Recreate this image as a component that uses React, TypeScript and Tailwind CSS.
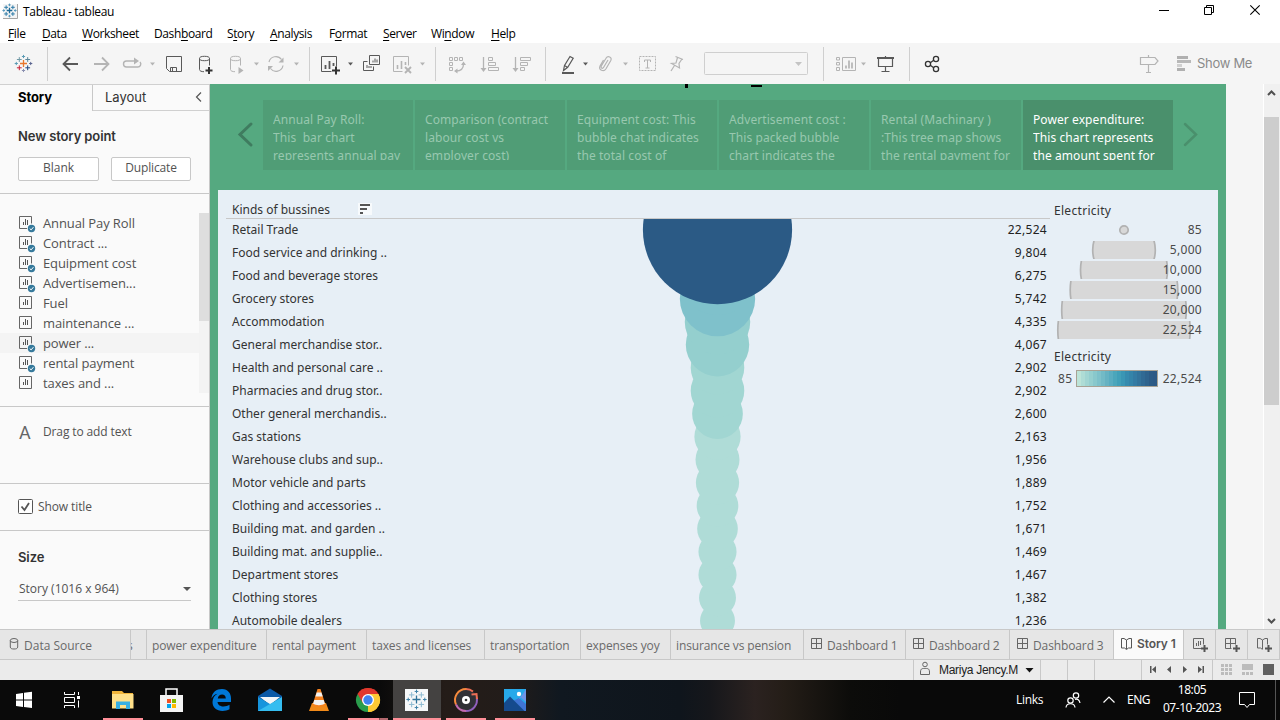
import React from "react";

type IcProps = { x: number; y: number; w: number; h: number; children?: React.ReactNode };

/* Icon cell: the drawing inside uses window coordinates, the cell itself sits in the flow. */
function Ic({ x, y, w, h, children }: IcProps) {
  return (
    <svg width={w} height={h} viewBox={`${x} ${y} ${w} ${h}`} fill="none" className="block shrink-0">
      {children}
    </svg>
  );
}

function Plus({ x, y, s, c, t = 1 }: { x: number; y: number; s: number; c: string; t?: number }) {
  return <path d={`M${x - s} ${y}H${x + s}M${x} ${y - s}V${y + s}`} stroke={c} strokeWidth={t} />;
}

function Caret({ x, y, c }: { x: number; y: number; c: string }) {
  return <path d={`M${x - 2.5} ${y - 1.5}h5l-2.5 3z`} fill={c} />;
}

const D = "#595959";
const L = "#b4b4b4";

function TableauMark({ x, y, k = 1, colors }: { x: number; y: number; k?: number; colors: string[] }) {
  return (
    <g>
      <Plus x={x} y={y} s={3.5 * k} c={colors[0]} t={1.3} />
      <Plus x={x - 4.2 * k} y={y - 4 * k} s={2.4 * k} c={colors[1]} />
      <Plus x={x + 4.2 * k} y={y - 4 * k} s={2.4 * k} c={colors[2]} />
      <Plus x={x - 4.2 * k} y={y + 4.3 * k} s={2.4 * k} c={colors[3]} />
      <Plus x={x + 4.2 * k} y={y + 4.3 * k} s={2.4 * k} c={colors[4]} />
      <Plus x={x} y={y - 7 * k} s={1.6 * k} c={colors[5]} />
      <Plus x={x} y={y + 7 * k} s={1.6 * k} c={colors[6]} />
      <Plus x={x - 7.2 * k} y={y} s={1.6 * k} c={colors[7]} />
      <Plus x={x + 7.2 * k} y={y} s={1.6 * k} c={colors[8]} />
    </g>
  );
}

const BLUE = ["#1f6a97", "#2d7ba8", "#2d7ba8", "#2d7ba8", "#2d7ba8", "#5b9bbd", "#5b9bbd", "#5b9bbd", "#5b9bbd"];
const SOFT = ["#2f7399", "#8dbbd2", "#8dbbd2", "#8dbbd2", "#8dbbd2", "#3f83a8", "#3f83a8", "#3f83a8", "#3f83a8"];
const BRAND = ["#e8762c", "#7199a6", "#5b879b", "#c72035", "#1f447e", "#5b9bb5", "#8a8fb0", "#5b9bb5", "#5b6591"];

function TitleBar() {
  return (
    <div className="flex h-[23px] bg-white">
      <Ic x={0} y={0} w={23} h={23}>
        <rect x="3" y="4" width="14" height="14" fill="#f5f5f5" />
        <path d="M3 18.5H17.5V4" stroke="#a5a5a5" />
        <TableauMark x={9.5} y={10.5} k={0.8} colors={BLUE} />
      </Ic>
      <span className="w-[1120px] text-[12px] leading-[24px] tracking-[-0.32px] text-black">Tableau - tableau</span>
      <Ic x={1143} y={0} w={137} h={23}>
        <path d="M1159 10.5h10" stroke="#000" />
        <path d="M1204.500 7.500h7v7h-7zM1206.500 7.500v-2h7v7h-2" stroke="#000" />
        <path d="M1250.300 5.300l9.400 9.400M1259.700 5.300l-9.400 9.400" stroke="#000" strokeWidth="1.1" />
      </Ic>
    </div>
  );
}

const MENUS: { a: string; u: string; b: string; cls: string }[] = [
  { a: "", u: "F", b: "ile", cls: "w-[34px]" },
  { a: "", u: "D", b: "ata", cls: "w-[40px]" },
  { a: "", u: "W", b: "orksheet", cls: "w-[72px]" },
  { a: "Dash", u: "b", b: "oard", cls: "w-[73px]" },
  { a: "S", u: "t", b: "ory", cls: "w-[43px]" },
  { a: "", u: "A", b: "nalysis", cls: "w-[59px]" },
  { a: "F", u: "o", b: "rmat", cls: "w-[54px]" },
  { a: "", u: "S", b: "erver", cls: "w-[48px]" },
  { a: "Wi", u: "n", b: "dow", cls: "w-[60px]" },
  { a: "", u: "H", b: "elp", cls: "w-[40px]" },
];

function MenuBar() {
  return (
    <div className="flex h-5 bg-white pl-2 text-[12px] leading-[22px] tracking-[-0.38px] text-black">
      {MENUS.map((m) => (
        <span key={m.a + m.u + m.b} className={m.cls}>
          {m.a}
          <span className="underline underline-offset-2">{m.u}</span>
          {m.b}
        </span>
      ))}
    </div>
  );
}

function Sep({ x }: { x: number }) {
  return <path d={`M${x + 0.5} 47v34`} stroke="#cfcfcf" />;
}

function ToolBar() {
  return (
    <div className="flex h-[41px] bg-[#f5f5f5]">
      <Ic x={0} y={43} w={56} h={41}>
        <TableauMark x={23.5} y={63.5} colors={BRAND} />
        <Sep x={47} />
      </Ic>
      <Ic x={56} y={43} w={32} h={41}>
        <path d="M78 64H63.500M70 57.500L63.500 64L70 70.500" stroke={D} strokeWidth="1.8" />
      </Ic>
      <Ic x={88} y={43} w={30} h={41}>
        <path d="M94 64h14.500M102 57.500l6.500 6.500l-6.500 6.500" stroke={L} strokeWidth="1.8" />
      </Ic>
      <Ic x={118} y={43} w={42} h={41}>
        <path d="M134 61h-7.500a3 3 0 0 0 0 6h11a3 3 0 0 0 2.500-5" stroke={L} strokeWidth="1.4" />
        <path d="M134 57.500l5 3.500l-5 3.500z" fill={L} />
        <Caret x={152.500} y={64} c={L} />
      </Ic>
      <Ic x={160} y={43} w={30} h={41}>
        <path d="M166.500 56.500h15v15h-12l-3-3z" stroke={D} />
        <path d="M170.500 71.500v-4h6v4M172.500 68v3" stroke={D} />
      </Ic>
      <Ic x={190} y={43} w={32} h={41}>
        <ellipse cx="204.500" cy="58.500" rx="5" ry="2.200" stroke={D} />
        <path d="M199.500 58.500v11c0 1.500 2 2.200 4.500 2.200M209.500 58.500v7" stroke={D} />
        <path d="M205.500 70.500h7M209 67v7" stroke="#333" strokeWidth="2" />
      </Ic>
      <Ic x={222} y={43} w={42} h={41}>
        <ellipse cx="235.500" cy="58.500" rx="5" ry="2.200" stroke={L} />
        <path d="M230.500 58.500v11c0 1.500 2 2.200 4.500 2.200M240.500 58.500v7" stroke={L} />
        <path d="M238.500 67l5 3.500l-5 3.500z" fill={L} />
        <Caret x={256.500} y={64} c={L} />
      </Ic>
      <Ic x={264} y={43} w={52} h={41}>
        <path d="M269 62a7 7 0 0 1 12.500-2.500M283 65.500a7 7 0 0 1-12.500 3" stroke={L} strokeWidth="1.200" />
        <path d="M283.500 57.500v5h-5zM268 71v-5h5z" fill={L} />
        <Caret x={296.500} y={64} c={L} />
        <Sep x={309} />
      </Ic>
      <Ic x={316} y={43} w={42} h={41}>
        <path d="M331.500 71.500h-10v-15h15v10" stroke={D} />
        <path d="M325.500 69v-4M329.500 69v-8M333.500 66v-3" stroke={D} strokeWidth="1.800" />
        <path d="M332 70.500h8M336 66.500v8" stroke="#333" strokeWidth="2" />
        <Caret x={350.500} y={64} c={D} />
      </Ic>
      <Ic x={358} y={43} w={30} h={41}>
        <path d="M369.500 55.500h10v9h-10z" stroke={D} />
        <path d="M373 62.500v-2M375 62.500v-4M377 62.500v-3" stroke={D} />
        <path d="M367.500 61.500h-4v9h10v-4M367 68v-3M369 68v-2M371 68v-2" stroke={D} />
      </Ic>
      <Ic x={388} y={43} w={58} h={41}>
        <path d="M402.500 71.500h-9v-15h15v9" stroke={L} />
        <path d="M397.500 69v-4M401.500 69v-8M405.500 65v-3" stroke={L} strokeWidth="1.600" />
        <path d="M405 67l6 6M411 67l-6 6" stroke={L} strokeWidth="1.900" />
        <Caret x={422.500} y={64} c={L} />
        <Sep x={435} />
      </Ic>
      <Ic x={446} y={43} w={30} h={41}>
        <path d="M449.500 57.500h3v3h-3zM454.500 57.500h3v3h-3zM459.500 57.500h3v3h-3zM449.500 62.500h3v3h-3zM449.500 67.500h3v3h-3z" stroke={L} />
        <path d="M463.500 64c0 4.500-3 7-7.500 7" stroke={L} strokeWidth="1.300" />
        <path d="M461 65l2.500-3.500l2.500 3.500zM457.500 68.500l-3.500 2.500l3.500 2.500z" fill={L} />
      </Ic>
      <Ic x={476} y={43} w={32} h={41}>
        <path d="M483.500 57v13" stroke={L} strokeWidth="1.300" />
        <path d="M480.500 68h6l-3 4z" fill={L} />
        <path d="M488.500 57.500h4v3h-4zM488.500 62.500h7v3h-7zM488.500 67.500h10v3h-10z" stroke={L} />
      </Ic>
      <Ic x={508} y={43} w={48} h={41}>
        <path d="M515.500 57v13" stroke={L} strokeWidth="1.300" />
        <path d="M512.500 68h6l-3 4z" fill={L} />
        <path d="M520.500 57.500h10v3h-10zM520.500 62.500h7v3h-7zM520.500 67.500h4v3h-4z" stroke={L} />
        <Sep x={545} />
      </Ic>
      <Ic x={556} y={43} w={38} h={41}>
        <path d="M563.500 70.500l1-5l5.500-9l3.200 1.800l-5.500 9zM564.500 65.500l3.200 2" stroke={D} strokeWidth="1.200" />
        <path d="M562 73h12" stroke={D} strokeWidth="2" />
        <Caret x={585.500} y={64} c={D} />
      </Ic>
      <Ic x={594} y={43} w={40} h={41}>
        <path d="M608 60l-4.500 7.500c-.8 1.500-3 .5-2.300-1.200l4.800-8c1.800-3.200 6.500-1.200 4.800 2.200l-4.800 8.200c-2.300 3.700-7.700 1.300-6-2.700l3.500-6" stroke={L} strokeWidth="1.200" />
        <Caret x={625.500} y={64} c={L} />
      </Ic>
      <Ic x={634} y={43} w={32} h={41}>
        <path d="M639.500 56.500h16v14h-16z" stroke={L} strokeDasharray="2 1" />
        <path d="M644.500 62v-2h6v2M647.500 60v8M645.500 68h4" stroke={L} />
      </Ic>
      <Ic x={666} y={43} w={38} h={41}>
        <path d="M675.500 56.500l7.500 3M677.500 57.500l-1.500 5.500l-4.500.500l8 4.500l-.500-4.500l3-4.500M674.500 65.500l-3.500 5.500" stroke={L} strokeWidth="1.200" />
      </Ic>
      <Ic x={704} y={43} w={128} h={41}>
        <rect x="704.500" y="52.500" width="103" height="22" rx="1" stroke="#cfcfcf" />
        <path d="M795 62h7l-3.500 4z" fill="#c4c4c4" />
        <Sep x={823} />
      </Ic>
      <Ic x={832} y={43} w={40} h={41}>
        <path d="M836.500 57.500h3v2.500h-3zM836.500 62.500h3v2.500h-3zM836.500 67.500h3v3h-3zM842.500 57.500h13v13h-13z" stroke={L} />
        <path d="M846 68.500v-3M849 68.500v-8M852 68.500v-6" stroke={L} strokeWidth="1.700" />
        <Caret x={863.500} y={64} c={L} />
      </Ic>
      <Ic x={872} y={43} w={48} h={41}>
        <path d="M877 58h17" stroke={D} strokeWidth="2" />
        <path d="M878.500 58v8.500h14v-8.500M885.500 56v1M885.500 67v4M881.500 71.500h8" stroke={D} strokeWidth="1.200" />
        <Sep x={909} />
      </Ic>
      <Ic x={920} y={43} w={210} h={41}>
        <path d="M930 63l4-3M930 65l4 3" stroke="#333" strokeWidth="1.200" />
        <circle cx="928" cy="64" r="2.600" stroke="#333" strokeWidth="1.300" />
        <circle cx="936" cy="59" r="2.600" stroke="#333" strokeWidth="1.300" />
        <circle cx="936" cy="69" r="2.600" stroke="#333" strokeWidth="1.300" />
      </Ic>
      <Ic x={1130} y={43} w={67} h={41}>
        <path d="M1140.500 57.500h14.500l3 3.500l-3 3.500h-14.500zM1148.500 55v2M1148.500 65v7M1146 72.500h5" stroke={L} strokeWidth="1.200" />
        <path d="M1177 56h11v3h-11zM1177 68h8v3h-8z" fill="#b0b0b0" />
        <path d="M1177 60h14v3h-14z" fill="#b8b8b8" />
        <path d="M1177 64h5v3h-5z" fill="#d0d0d0" />
      </Ic>
      <span className="font-['Inter'] text-[13px] leading-[41px] tracking-[-0.3px] text-[#8a8a8a]">Show Me</span>
    </div>
  );
}

const SHEETS: { name: string; used: boolean }[] = [
  { name: "Annual Pay Roll", used: true },
  { name: "Contract ...", used: true },
  { name: "Equipment cost", used: true },
  { name: "Advertisemen...", used: true },
  { name: "Fuel", used: false },
  { name: "maintenance ...", used: false },
  { name: "power ...", used: true },
  { name: "rental payment", used: true },
  { name: "taxes and ...", used: false },
];

function SheetIcon({ used }: { used: boolean }) {
  return (
    <Ic x={0} y={0} w={43} h={20}>
      <path d={used ? "M27 15.500h-7.500v-12h12v7" : "M19.500 3.500h12v12h-12z"} stroke="#666" />
      <path d="M23.500 12v-3M25.500 12v-6M27.500 12v-5" stroke="#555" />
      {used && (
        <g>
          <circle cx="31.500" cy="15.500" r="3.700" fill="#35799b" />
          <path d="M29.700 15.500l1.400 1.400l2.300-2.700" stroke="#fff" />
        </g>
      )}
    </Ic>
  );
}

function SideBar() {
  return (
    <div className="flex w-[210px] shrink-0 flex-col border-r border-[#c8c8c8] bg-[#fafafa] text-[#525252]">
      <div className="flex h-[27px] border-t border-[#d0d0d0] font-['Inter'] text-[13px] leading-[24px]">
        <div className="w-[93px] border-r border-[#c8c8c8] pl-[18px] font-bold tracking-[-0.1px] text-black">Story</div>
        <div className="flex flex-1 border-b border-[#d0d0d0] pl-3">
          <span className="w-[87px] text-[#333]">Layout</span>
          <Ic x={192} y={85} w={16} h={25}>
            <path d="M201 92.500l-4.500 4.500l4.500 4.500" stroke="#555" strokeWidth="1.200" />
          </Ic>
        </div>
      </div>
      <div className="flex h-[83px] flex-col border-b border-[#c8c8c8] pl-[18px]">
        <div className="mt-[15px] h-5 font-['Inter'] text-[13px] leading-5 font-semibold tracking-[-0.1px] text-[#333]">New story point</div>
        <div className="mt-[11px] flex gap-3 text-center text-[12px] leading-[20px]">
          <div className="h-6 w-[81px] rounded-[2px] border border-[#c8c8c8] bg-white">Blank</div>
          <div className="h-6 w-[80px] rounded-[2px] border border-[#c8c8c8] bg-white tracking-[-0.15px]">Duplicate</div>
        </div>
      </div>
      <div className="flex h-[213px] border-b border-[#c8c8c8] pt-[19px]">
        <div className="w-[199px]">
          {SHEETS.map((s) => (
            <div key={s.name} className={s.name === "power ..." ? "flex h-5 bg-[#f4f4f4]" : "flex h-5"}>
              <SheetIcon used={s.used} />
              <span className="text-[13px] leading-5 tracking-[-0.1px] whitespace-pre">{s.name}</span>
            </div>
          ))}
        </div>
        <div className="h-[180px] w-[10px] bg-[#f3f3f3]">
          <div className="h-[108px] bg-[#dedede]" />
        </div>
      </div>
      <div className="flex h-[77px] border-b border-[#c8c8c8] pt-[15px] leading-5">
        <span className="w-[43px] pl-[19px] font-['Roboto'] text-[18px] leading-[21px] text-[#666]">A</span>
        <span className="text-[12px] tracking-[-0.12px]">Drag to add text</span>
      </div>
      <div className="flex h-[47px] border-b border-[#c8c8c8] text-[12px] leading-[46px]">
        <Ic x={0} y={484} w={38} h={46}>
          <rect x="18.500" y="499.500" width="14" height="14" rx="1" stroke="#555" fill="#fff" />
          <path d="M21.500 506.500l3 3.500l4.500-7" stroke="#555" strokeWidth="1.800" />
        </Ic>
        <span className="tracking-[-0.1px]">Show title</span>
      </div>
      <div className="pl-[18px]">
        <div className="mt-[16px] h-5 font-['Inter'] text-[13px] leading-5 font-semibold tracking-[-0.1px] text-[#333]">Size</div>
        <div className="mt-[11px] flex h-[23px] w-[173px] border-b border-[#c8c8c8] pl-px text-[12px] leading-[22px]">
          <span className="w-[164px]">Story (1016 x 964)</span>
          <Ic x={183} y={578} w={8} h={22}>
            <path d="M183 587h8l-4 4z" fill="#555" />
          </Ic>
        </div>
      </div>
    </div>
  );
}

const POINTS: string[][] = [
  ["Annual Pay Roll:", "This  bar chart", "represents annual pay"],
  ["Comparison (contract", "labour cost vs", "employer cost)"],
  ["Equipment cost: This", "bubble chat indicates", "the total cost of"],
  ["Advertisement cost :", "This packed bubble", "chart indicates the"],
  ["Rental (Machinary )", ":This tree map shows", "the rental payment for"],
  ["Power expenditure:", "This chart represents", "the amount spent for"],
];

const ROWS: { name: string; label: string; value: number; color: string }[] = [
  { name: "Retail Trade", label: "22,524", value: 22524, color: "#2b5a85" },
  { name: "Food service and drinking ..", label: "9,804", value: 9804, color: "#4fa5bb" },
  { name: "Food and beverage stores", label: "6,275", value: 6275, color: "#7fc1cb" },
  { name: "Grocery stores", label: "5,742", value: 5742, color: "#7fc1cb" },
  { name: "Accommodation", label: "4,335", value: 4335, color: "#94cfce" },
  { name: "General merchandise stor..", label: "4,067", value: 4067, color: "#94cfce" },
  { name: "Health and personal care ..", label: "2,902", value: 2902, color: "#a1d6d2" },
  { name: "Pharmacies and drug stor..", label: "2,902", value: 2902, color: "#a1d6d2" },
  { name: "Other general merchandis..", label: "2,600", value: 2600, color: "#a1d6d2" },
  { name: "Gas stations", label: "2,163", value: 2163, color: "#afdcd7" },
  { name: "Warehouse clubs and sup..", label: "1,956", value: 1956, color: "#afdcd7" },
  { name: "Motor vehicle and parts", label: "1,889", value: 1889, color: "#afdcd7" },
  { name: "Clothing and accessories ..", label: "1,752", value: 1752, color: "#afdcd7" },
  { name: "Building mat. and garden ..", label: "1,671", value: 1671, color: "#afdcd7" },
  { name: "Building mat. and supplie..", label: "1,469", value: 1469, color: "#afdcd7" },
  { name: "Department stores", label: "1,467", value: 1467, color: "#afdcd7" },
  { name: "Clothing stores", label: "1,382", value: 1382, color: "#afdcd7" },
  { name: "Automobile dealers", label: "1,236", value: 1236, color: "#afdcd7" },
];

const SIZES = [
  { label: "85", r: 4.2 },
  { label: "5,000", r: 31.3 },
  { label: "10,000", r: 43.5 },
  { label: "15,000", r: 53.8 },
  { label: "20,000", r: 62.3 },
  { label: "22,524", r: 66.2 },
];

const RAMP = ["#bce4d8", "#aedcd5", "#a1d5d2", "#95cfcf", "#89c8cc", "#7ec1ca", "#72bac6", "#66b2c2", "#59acc0", "#4ba6bb", "#419fb8", "#3a96b4", "#368bae", "#3584a9", "#347ba3", "#33739b", "#306a94", "#2e638d", "#2c5b86", "#2c5985"];

function Legend() {
  return (
    <div className="w-[168px] pt-[11px] pl-1 tracking-[0.3px] text-[#4a4a4a]">
      <div className="h-[19px] leading-5 text-[#333]">Electricity</div>
      {SIZES.map((s) => (
        <div key={s.label} className="grid h-5 w-[148px] items-center leading-[20px]">
          <svg width="148" height="18" viewBox="1054 -9 148 18" className="[grid-area:1/1]">
            <circle cx="1124" cy="0" r={s.r} fill="#d8d8d8" stroke="#b2b2b2" strokeWidth="1.700" />
          </svg>
          <span className="text-right [grid-area:1/1]">{s.label}</span>
        </div>
      ))}
      <div className="mt-[7px] h-5 leading-5 text-[#333]">Electricity</div>
      <div className="mt-[3px] flex h-[17px] w-[148px] items-center pl-1">
        <span className="w-[18px]">85</span>
        <div className="flex h-[17px] w-[82px] border border-[#a8a294]">
          {RAMP.map((c) => (
            <div key={c} className="flex-1" style={{ backgroundColor: c }} />
          ))}
        </div>
        <span className="flex-1 text-right">22,524</span>
      </div>
    </div>
  );
}

function StoryCanvas() {
  return (
    <div className="flex w-[1016px] shrink-0 flex-col overflow-hidden bg-[#55a980] font-['Noto_Sans'] text-[12px]">
      <Ic x={210} y={84} w={1016} h={16}>
        <path d="M685 84h3v4h-3zM751 85h11v2h-11z" fill="#000" />
      </Ic>
      <div className="flex h-[70px]">
        <Ic x={210} y={100} w={53} h={70}>
          <path d="M251 124l-11 10.500l11 10.500" stroke="#3f7c5f" strokeWidth="3" strokeLinecap="round" />
        </Ic>
        <div className="flex gap-[2px]">
          {POINTS.map((p, i) => (
            <div
              key={p[0]}
              className={
                i === 5
                  ? "h-[70px] w-[150px] bg-[#4a906c] pt-[11px] pl-[10px] text-white"
                  : "h-[70px] w-[150px] bg-[#509d76] pt-[11px] pl-[10px] text-[#98c8af]"
              }
            >
              <div className="h-[49px] overflow-hidden leading-[18px] tracking-[0.08px] whitespace-pre">
                {p.map((l) => (
                  <div key={l}>{l}</div>
                ))}
              </div>
            </div>
          ))}
        </div>
        <Ic x={1173} y={100} w={53} h={70}>
          <path d="M1185 124l11 10.500l-11 10.500" stroke="#4a906c" strokeWidth="2.500" strokeLinecap="round" />
        </Ic>
      </div>
      <div className="mt-5 ml-2 flex h-[439px] w-[1000px] overflow-hidden bg-[#e7eff6] pl-2">
        <div className="flex w-[824px] flex-col">
          <div className="flex h-[29px] shrink-0 border-b border-[#c8c8c8] pl-[6px] leading-[39px] text-[#333]">
            <span className="w-[126px]">Kinds of bussines</span>
            <Ic x={358} y={190} w={16} h={28}>
              <path d="M358 203h14v12h-14z" fill="#f7fafc" />
              <path d="M360 205h10M360 209h7M360 213h3" stroke="#555" strokeWidth="1.800" />
            </Ic>
          </div>
          <div className="flex h-[410px] overflow-hidden leading-[21px]">
            <div className="w-[166px] pl-[6px] whitespace-pre text-[#333]">
              {ROWS.map((r) => (
                <div key={r.name} className="h-[23px]">{r.name}</div>
              ))}
            </div>
            <Ic x={392} y={219} w={598} h={410}>
              {ROWS.map((r, i) => ({ ...r, i })).reverse().map((r) => (
                <circle key={r.name} cx="717.500" cy={229.7 + 23 * r.i} r={74.6 * Math.sqrt(r.value / 22524)} fill={r.color} />
              ))}
            </Ic>
            <div className="w-[57px] text-right tracking-[0.3px] text-[#222]">
              {ROWS.map((r) => (
                <div key={r.name} className="h-[23px]">{r.label}</div>
              ))}
            </div>
          </div>
        </div>
        <Legend />
      </div>
    </div>
  );
}

function Scroll() {
  return (
    <div className="ml-[37px] flex w-[17px] flex-col border-l border-white bg-[#f0f0f0]">
      <Ic x={1264} y={84} w={16} h={33}>
        <path d="M1268 95l3.500-3.500l3.500 3.500" stroke="#505050" strokeWidth="2" />
      </Ic>
      <div className="h-[288px] w-[15px] bg-[#cdcdcd]" />
      <div className="flex-1" />
      <Ic x={1264} y={610} w={16} h={19}>
        <path d="M1268 619l3.500 3.500l3.500-3.500" stroke="#505050" strokeWidth="2" />
      </Ic>
    </div>
  );
}

const TABS: { name: string; cls: string }[] = [
  { name: "power expenditure", cls: "w-[120px]" },
  { name: "rental payment", cls: "w-[100px]" },
  { name: "taxes and licenses", cls: "w-[118px]" },
  { name: "transportation", cls: "w-[96px]" },
  { name: "expenses yoy", cls: "w-[90px]" },
  { name: "insurance vs pension", cls: "w-[133px]" },
];

function Tabs() {
  return (
    <div className="flex h-[31px] border-y border-[#c8c8c8] bg-[#e6e6e6] text-[12px] leading-[31px] tracking-[-0.12px] whitespace-nowrap text-[#6a6a6a]">
      <div className="flex w-[131px] shrink-0 border-r border-[#c8c8c8]">
        <Ic x={0} y={630} w={24} h={29}>
          <ellipse cx="14" cy="640.500" rx="3.700" ry="2" stroke="#666" />
          <path d="M10.300 640.500v6.500c0 1.500 1.500 2 3.700 2s3.700-.500 3.700-2v-6.500" stroke="#666" />
        </Ic>
        <span className="tracking-normal">Data Source</span>
      </div>
      <div className="flex w-4 shrink-0 overflow-hidden border-r border-[#c8c8c8]">
        <span className="-ml-[4px]">s</span>
      </div>
      {TABS.map((t) => (
        <div key={t.name} className={`${t.cls} shrink-0 border-r border-[#c8c8c8] pl-[5px]`}>{t.name}</div>
      ))}
      {["Dashboard 1", "Dashboard 2", "Dashboard 3"].map((t, i) => (
        <div key={t} className={i === 0 ? "flex w-[102px] shrink-0 border-r border-[#c8c8c8]" : "flex w-[104px] shrink-0 border-r border-[#c8c8c8]"}>
          <Ic x={0} y={630} w={23} h={29}>
            <path d="M7.500 638.500h10v10h-10zM12.500 638.500v10M7.500 643.500h10" stroke="#666" />
          </Ic>
          <span>{t}</span>
        </div>
      ))}
      <div className="flex w-[70px] shrink-0 border-r border-[#c8c8c8] bg-[#fafafa] font-['Inter'] font-semibold leading-[27px] tracking-[-0.1px] text-[#555]">
        <Ic x={1114} y={630} w={23} h={29}>
          <path d="M1126.500 640l-2.500-1.500h-2.500v9.500h3l2 1.500l2-1.500h3v-9.500h-2.500zM1126.500 640v9" stroke="#555" />
        </Ic>
        <span>Story 1</span>
      </div>
      <Ic x={1184} y={630} w={96} h={29}>
        <path d="M1202.500 648.500h-9v-10h10v6M1196.500 646v-3M1198.500 646v-5M1200.500 645v-4" stroke="#666" />
        <path d="M1225.500 638.500h10v6M1225.500 638.500v10h6M1230.500 638.500v10M1225.500 643.500h10" stroke="#666" />
        <path d="M1262.500 640l-2.500-1.500h-2.500v9.500h3l2 1.500M1262.500 640v9M1262.500 640l2.500-1.500h2.500v6" stroke="#666" />
        <path d="M1201 648.500h7M1204.500 645v7M1233 648.500h7M1236.500 645v7M1265 648.500h7M1268.500 645v7" stroke="#555" strokeWidth="2" />
        <path d="M1215.500 630v29M1247.500 630v29M1279.500 630v29" stroke="#c8c8c8" />
      </Ic>
    </div>
  );
}

function Status() {
  return (
    <div className="flex h-[21px] bg-[#ebebeb]">
      <div className="w-[914px] border-r border-[#c8c8c8]" />
      <Ic x={914} y={660} w={25} h={20}>
        <circle cx="925" cy="664.500" r="2.300" stroke="#666" />
        <path d="M920.500 672c0-4 2.500-3.500 4.500-3.500s4.500-.500 4.500 3.500v2.500h-9z" stroke="#666" />
      </Ic>
      <span className="w-[84px] font-['Liberation_Sans'] text-[12px] leading-[20px] tracking-[-0.3px] text-[#222]">Mariya Jency.M</span>
      <Ic x={1023} y={660} w={257} h={20}>
        <path d="M1025.500 668h8l-4 4.500z" fill="#111" />
        <path d="M1040.500 660v20M1067.500 660v20M1094.500 660v20M1141.500 660v20M1212.500 660v20" stroke="#c8c8c8" />
        <path d="M1150 666h1.500v7h-1.500zM1156 666v7l-4-3.500zM1171 666v7l-4-3.500zM1183 666v7l4-3.500zM1198 666v7l4-3.500zM1202.500 666h1.500v7h-1.500z" fill="#555" />
        <path d="M1221 664h3v3h-3zM1225 664h3v3h-3zM1229 664h3v3h-3zM1221 668h3v3h-3zM1225 668h3v3h-3zM1229 668h3v3h-3zM1221 672h3v3h-3zM1225 672h3v3h-3zM1229 672h3v3h-3zM1242 664h11v6h-11zM1242 672h3v3h-3zM1246 672h3v3h-3zM1250 672h3v3h-3z" fill="#bcbcbc" />
        <path d="M1263 664h11v11h-11z" fill="#606060" />
      </Ic>
    </div>
  );
}

function TaskBar() {
  return (
    <div className="flex h-10 shrink-0 bg-[linear-gradient(90deg,#0a0a0a_0,#0a0a0a_380px,#241c18_445px,#221c1a_510px,#101820_560px,#0f151c_680px,#16171b_710px,#2b2220_755px,#241d17_785px,#0c0c0a_850px,#090909_900px)] font-['Noto_Sans'] text-[12px] text-white">
      <Ic x={0} y={680} w={48} h={40}>
        <path d="M16 694l7-1v6.500h-7zM24 692.800l8-1v7.700h-8zM16 700.500h7v6.500l-7-1zM24 700.500h8v7.500l-8-1z" fill="#fff" />
      </Ic>
      <Ic x={48} y={680} w={50} h={40}>
        <path d="M64.500 692v2.500h10v-2.500M64.500 708v-2.500h10v2.500M64.500 697.500h10v5h-10zM78.500 692v3M78.500 700.500v7" stroke="#fff" />
        <rect x="77" y="696" width="3" height="3" fill="#fff" />
      </Ic>
      <Ic x={98} y={680} w={49} h={40}>
        <path d="M112 691h10l2 2h9v15h-21z" fill="#f1b53b" />
        <path d="M112 694h21.500v14.500h-21.500z" fill="#ffe08a" />
        <path d="M116 709v-7.500h14v7.500h-4v-4h-6v4z" fill="#38b0e4" />
        <path d="M103 718h40v2h-40z" fill="#ff8f98" />
      </Ic>
      <Ic x={147} y={680} w={49} h={40}>
        <path d="M166 696v-7h11v7" stroke="#fff" strokeWidth="1.500" />
        <path d="M160 695h23v17h-23z" fill="#f4f4f4" />
        <path d="M167 699h4v4h-4z" fill="#f25022" />
        <path d="M172 699h4v4h-4z" fill="#7fba00" />
        <path d="M167 704h4v4h-4z" fill="#00a4ef" />
        <path d="M172 704h4v4h-4z" fill="#ffb900" />
      </Ic>
      <Ic x={196} y={680} w={49} h={40}>
        <path
          fillRule="evenodd"
          d="M211.500 698.500C212 692 216.500 689 222 689c6 0 9 4.500 9 9.500v3.500h-13.500c.300 3 3 4.500 6 4.500c2.200 0 4.200-.600 6-1.700v4.500c-2 1.200-4.500 1.700-7 1.700c-6 0-10-3.500-10-9c0-3.500 2-6.700 5-8.200c-2.500.500-4.700 2-6 4.700zM217.800 698.500h8c0-2.500-1.500-4-3.700-4s-4 1.500-4.300 4z"
          fill="#0078d7"
        />
      </Ic>
      <Ic x={245} y={680} w={49} h={40}>
        <path d="M258 696l12-7.500l12 7.500v5h-24z" fill="#0b59a6" />
        <path d="M260 697h20l-10 8z" fill="#f3f6f8" />
        <path d="M258 697l24 14h-24z" fill="#1695dd" />
        <path d="M282 697v14h-24z" fill="#35bdf0" />
      </Ic>
      <Ic x={294} y={680} w={49} h={40}>
        <path d="M312 703h14l3 8h-20z" fill="#f18a19" />
        <path d="M317.500 689h3l5 16c-3 2.500-10 2.500-13 0z" fill="#f58220" />
        <path d="M316.700 692.500h4.700l1.300 4h-7.300zM314.300 700h9.400l1.200 3.800c-3 1.800-9 1.800-11.800 0z" fill="#f2f2f2" />
      </Ic>
      <Ic x={343} y={680} w={50} h={40}>
        <path d="M368 700L357.600 694A12 12 0 0 1 378.400 694z" fill="#e0382d" />
        <path d="M368 700L378.400 694A12 12 0 0 1 368 712z" fill="#fcc934" />
        <path d="M368 700L368 712A12 12 0 0 1 357.600 694z" fill="#2a9d4c" />
        <path d="M368 694h10.400a12 12 0 0 0-20.800 0l5.200 9z" fill="#e0382d" />
        <path d="M373.200 703l-5.200 9a12 12 0 0 0 10.400-18h-10.400z" fill="#fcc934" />
        <circle cx="368" cy="700" r="6" fill="#fff" />
        <circle cx="368" cy="700" r="4.700" fill="#3f83ef" />
        <path d="M348 718h31.500v2h-31.500z" fill="#ff8f98" />
        <path d="M380 718h8v2h-8z" fill="#b3686e" />
      </Ic>
      <Ic x={393} y={680} w={48} h={40}>
        <path d="M393 680h48v38h-48z" fill="#444241" />
        <path d="M405 689h23v22h-23z" fill="#f6f8f9" />
        <TableauMark x={416.5} y={699.5} k={1.15} colors={SOFT} />
        <path d="M393 718h48v2h-48z" fill="#ff8f98" />
      </Ic>
      <Ic x={441} y={680} w={49} h={40}>
        <circle cx="466" cy="700" r="11" fill="#303035" />
        <path d="M466 689a11 11 0 0 0-10 15.500" stroke="#f68a3c" strokeWidth="2" />
        <path d="M456 704.500a11 11 0 0 0 10 6.500" stroke="#c26bb0" strokeWidth="2" />
        <path d="M466 711a11 11 0 0 0 10.800-13" stroke="#9160bd" strokeWidth="2" />
        <path d="M466 689a11 11 0 0 1 7 2.500M471.500 694.500l5-.500l.500 5" stroke="#ee6e55" strokeWidth="2" />
        <circle cx="466" cy="700" r="4" fill="#fff" />
        <circle cx="466" cy="700" r="1.300" fill="#333" />
        <path d="M446 718h40v2h-40z" fill="#ff8f98" />
      </Ic>
      <Ic x={490} y={680} w={526} h={40}>
        <path d="M504 689h22v22h-22z" fill="#27a9ea" />
        <path d="M513 701l6-3l7 6v7h-13z" fill="#3f74d4" />
        <path d="M518 700l3-2.500l5 4.500v-13l-3 5z" fill="#6f94e8" />
        <path d="M504 703l6-6.500l14.500 14.500h-20.500z" fill="#154a8d" />
        <circle cx="519" cy="694" r="2.200" fill="#fff" />
        <path d="M495 718h40v2h-40z" fill="#ff8f98" />
      </Ic>
      <span className="w-[44px] font-['Open_Sans'] leading-[40px] tracking-[-0.3px]">Links</span>
      <Ic x={1060} y={680} w={67} h={40}>
        <circle cx="1076" cy="695.500" r="2.700" stroke="#fff" strokeWidth="1.200" />
        <circle cx="1070.500" cy="700.500" r="2.700" stroke="#fff" strokeWidth="1.200" />
        <path d="M1066 707.500c.500-5 8.500-5 9 0M1075 699.500c2.500-1 4.500.500 5 3.500" stroke="#fff" strokeWidth="1.200" />
        <path d="M1103.500 702.500l5.500-5.500l5.500 5.500" stroke="#fff" strokeWidth="1.200" />
      </Ic>
      <span className="w-[31px] leading-[40px] tracking-[-0.5px]">ENG</span>
      <div className="w-[68px] pt-px text-center leading-[18px] tracking-[-0.45px] whitespace-nowrap">
        <div>18:05</div>
        <div>07-10-2023</div>
      </div>
      <Ic x={1226} y={680} w={54} h={40}>
        <path d="M1239.500 692.500h15v12h-5l-2.500 3l-2.500-3h-5z" stroke="#fff" />
        <path d="M1275.500 680v40" stroke="#555" />
      </Ic>
    </div>
  );
}

export default function App() {
  return (
    <div className="flex h-[720px] w-[1280px] flex-col overflow-hidden bg-[#f5f5f5] font-['Open_Sans',sans-serif]">
      <TitleBar />
      <MenuBar />
      <ToolBar />
      <div className="flex h-[545px] shrink-0 overflow-hidden">
        <SideBar />
        <StoryCanvas />
        <Scroll />
      </div>
      <Tabs />
      <Status />
      <TaskBar />
    </div>
  );
}
